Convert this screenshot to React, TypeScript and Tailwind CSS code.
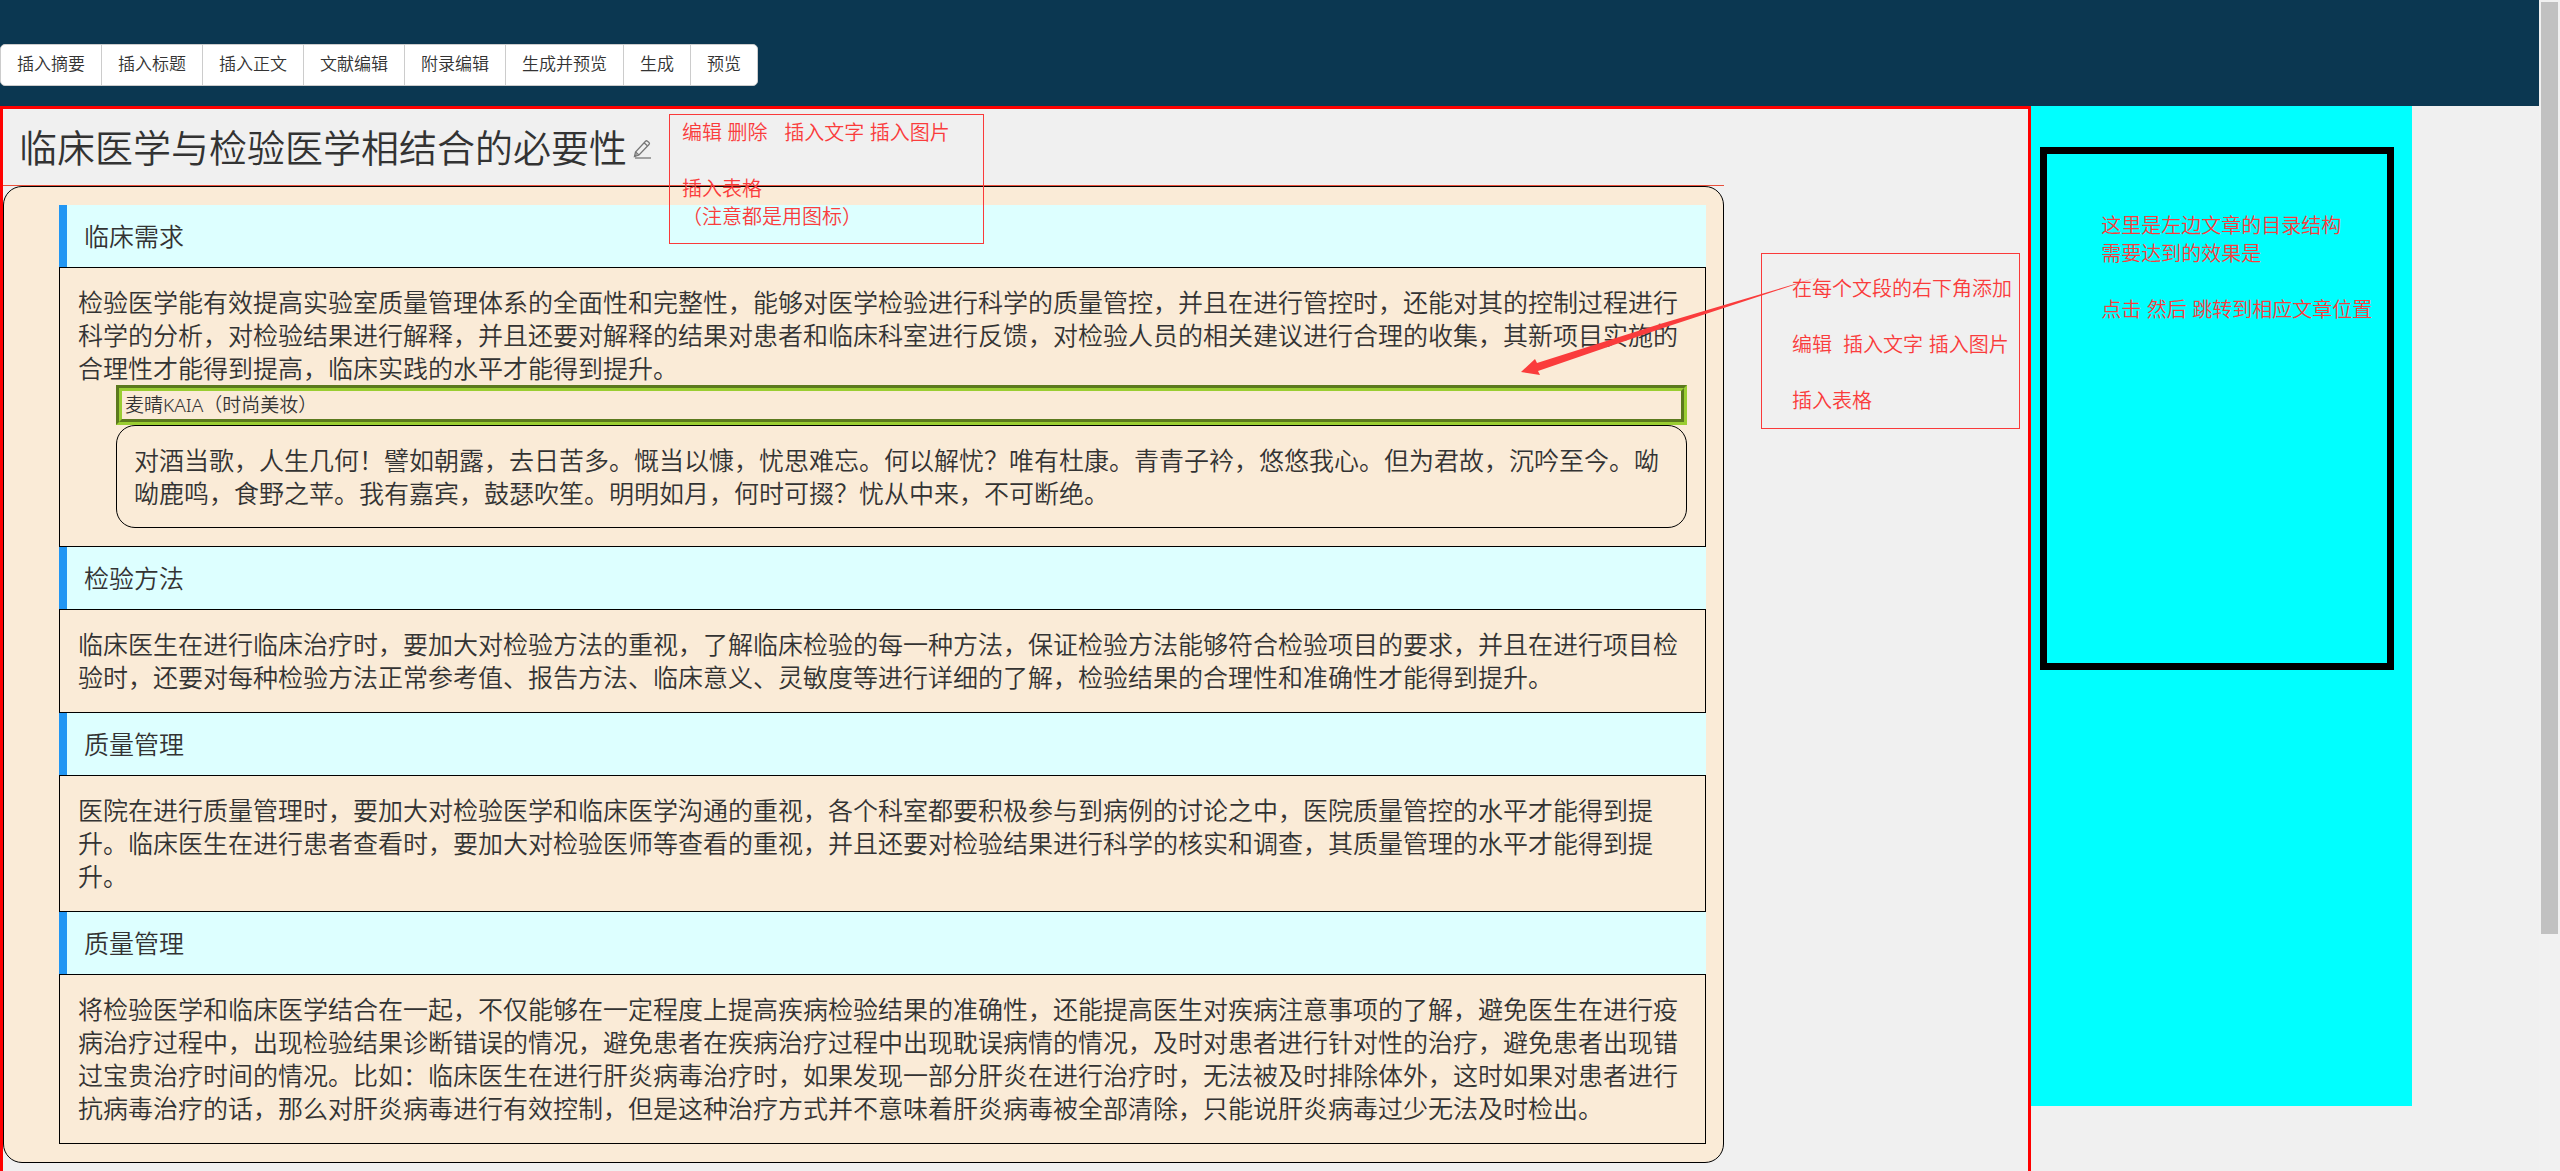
import { Fragment } from "react";

const tools = ["插入摘要", "插入标题", "插入正文", "文献编辑", "附录编辑", "生成并预览", "生成", "预览"];

const sections = [
  {
    title: "临床需求",
    body: "检验医学能有效提高实验室质量管理体系的全面性和完整性，能够对医学检验进行科学的质量管控，并且在进行管控时，还能对其的控制过程进行科学的分析，对检验结果进行解释，并且还要对解释的结果对患者和临床科室进行反馈，对检验人员的相关建议进行合理的收集，其新项目实施的合理性才能得到提高，临床实践的水平才能得到提升。",
    quote: {
      author: "麦晴KAIA（时尚美妆）",
      text: "对酒当歌，人生几何！譬如朝露，去日苦多。慨当以慷，忧思难忘。何以解忧？唯有杜康。青青子衿，悠悠我心。但为君故，沉吟至今。呦呦鹿鸣，食野之苹。我有嘉宾，鼓瑟吹笙。明明如月，何时可掇？忧从中来，不可断绝。",
    },
  },
  {
    title: "检验方法",
    body: "临床医生在进行临床治疗时，要加大对检验方法的重视，了解临床检验的每一种方法，保证检验方法能够符合检验项目的要求，并且在进行项目检验时，还要对每种检验方法正常参考值、报告方法、临床意义、灵敏度等进行详细的了解，检验结果的合理性和准确性才能得到提升。",
  },
  {
    title: "质量管理",
    body: "医院在进行质量管理时，要加大对检验医学和临床医学沟通的重视，各个科室都要积极参与到病例的讨论之中，医院质量管控的水平才能得到提升。临床医生在进行患者查看时，要加大对检验医师等查看的重视，并且还要对检验结果进行科学的核实和调查，其质量管理的水平才能得到提升。",
  },
  {
    title: "质量管理",
    body: "将检验医学和临床医学结合在一起，不仅能够在一定程度上提高疾病检验结果的准确性，还能提高医生对疾病注意事项的了解，避免医生在进行疫病治疗过程中，出现检验结果诊断错误的情况，避免患者在疾病治疗过程中出现耽误病情的情况，及时对患者进行针对性的治疗，避免患者出现错过宝贵治疗时间的情况。比如：临床医生在进行肝炎病毒治疗时，如果发现一部分肝炎在进行治疗时，无法被及时排除体外，这时如果对患者进行抗病毒治疗的话，那么对肝炎病毒进行有效控制，但是这种治疗方式并不意味着肝炎病毒被全部清除，只能说肝炎病毒过少无法及时检出。",
  },
];

function PencilIcon() {
  return (
    <svg viewBox="0 0 20 20" className="h-5 w-5" fill="none" stroke="#777" strokeWidth="1.3" aria-hidden="true">
      <path d="M1.5 17.5 2.5 13 12.5 2.2q1-1 2 0l1.5 1.3q1 1 0 2L6 16Z" />
      <path d="M2.5 13 6 16M11 3.8l3.4 3M1.5 17.5l2.2-2" />
      <path d="M2 19h16" />
    </svg>
  );
}

export default function App() {
  return (
    <div className="flex h-screen overflow-hidden bg-[#f0f0f0] font-['Noto_Sans','Noto_Sans_CJK_SC',sans-serif] font-[350] text-[#333]">
      <div className="relative min-w-0 flex-1">
        <header className="flex h-[106px] items-start bg-[#0b3751] pt-11">
          <nav className="flex h-[42px] overflow-hidden rounded-[5px] border border-[#ccc] bg-white">
            {tools.map((t) => (
              <button key={t} type="button" className="border-r border-[#ccc] px-4 pb-1 text-[17px] leading-none last:border-r-0">
                {t}
              </button>
            ))}
          </nav>
        </header>

        <div className="flex items-start">
          <main className="h-[1200px] w-4/5 border-[3px] border-[#f00]">
            <div className="flex h-[77px] w-[85%] items-center border-b border-[#e8503c] pl-4">
              <h1 className="text-[38px] leading-none">临床医学与检验医学相结合的必要性</h1>
              <button type="button" aria-label="编辑标题" className="ml-[6px] pt-1">
                <PencilIcon />
              </button>
            </div>
            <article className="w-[85%] rounded-[19px] border border-black bg-[#faebd7] py-[18px] pr-[17px] pl-[55px] text-[25px] leading-[33px]">
              {sections.map((s, i) => (
                <Fragment key={i}>
                  <h2 className="flex h-[62px] items-center border-l-8 border-[#2196f3] bg-[#ddffff] pl-[17px]">{s.title}</h2>
                  <div className="border border-black p-[18px]">
                    <p>{s.body}</p>
                    {s.quote && (
                      <div className="pl-[38px]">
                        <div className="border-[6px] border-[#9acd32] [border-style:groove] px-[3px] text-[19px] leading-7">{s.quote.author}</div>
                        <blockquote className="rounded-[19px] border border-black px-[17px] pt-[18px] pb-[17px]">{s.quote.text}</blockquote>
                      </div>
                    )}
                  </div>
                </Fragment>
              ))}
            </article>
          </main>

          <aside className="h-[1000px] w-[15%] bg-[#0ff] pt-[41px] pr-[18px] pl-[9px]">
            <div className="h-[523px] border-[7px] border-black pt-[58px] pl-[54px] font-['Liberation_Sans','Noto_Sans_CJK_SC',sans-serif] text-xl leading-7 whitespace-pre text-[#fa3c3c]">
              <p>这里是左边文章的目录结构</p>
              <p>需要达到的效果是</p>
              <p className="mt-7">点击 然后 跳转到相应文章位置</p>
            </div>
          </aside>
        </div>

        <div className="absolute top-[114px] left-[669px] h-[130px] w-[315px] border border-[#fa3a3a] pt-1 pl-3 font-['Liberation_Sans','Noto_Sans_CJK_SC',sans-serif] text-xl leading-7 whitespace-pre text-[#fa3c3c]">
          <p>编辑 删除   插入文字 插入图片</p>
          <p className="mt-7">插入表格</p>
          <p>（注意都是用图标）</p>
        </div>

        <div className="absolute top-[253px] left-[1761px] flex h-44 w-[259px] flex-col gap-7 border border-[#fa3a3a] pt-[21px] pl-[30px] font-['Liberation_Sans','Noto_Sans_CJK_SC',sans-serif] text-xl leading-7 whitespace-pre text-[#fa3c3c]">
          <p>在每个文段的右下角添加</p>
          <p>编辑  插入文字 插入图片</p>
          <p>插入表格</p>
        </div>

        <svg viewBox="0 0 320 170" className="absolute top-[270px] left-[1510px] h-[170px] w-80" aria-hidden="true">
          <path d="M11 102 25 89 27 93 150 54 305 8 150 59 28 101 30 105Z" fill="#fa3c3c" />
        </svg>
      </div>

      <div className="flex w-[21px] shrink-0 justify-center bg-[#f1f1f1] pt-[2px]">
        <div className="h-[932px] w-[17px] bg-[#c1c1c1]" />
      </div>
    </div>
  );
}
